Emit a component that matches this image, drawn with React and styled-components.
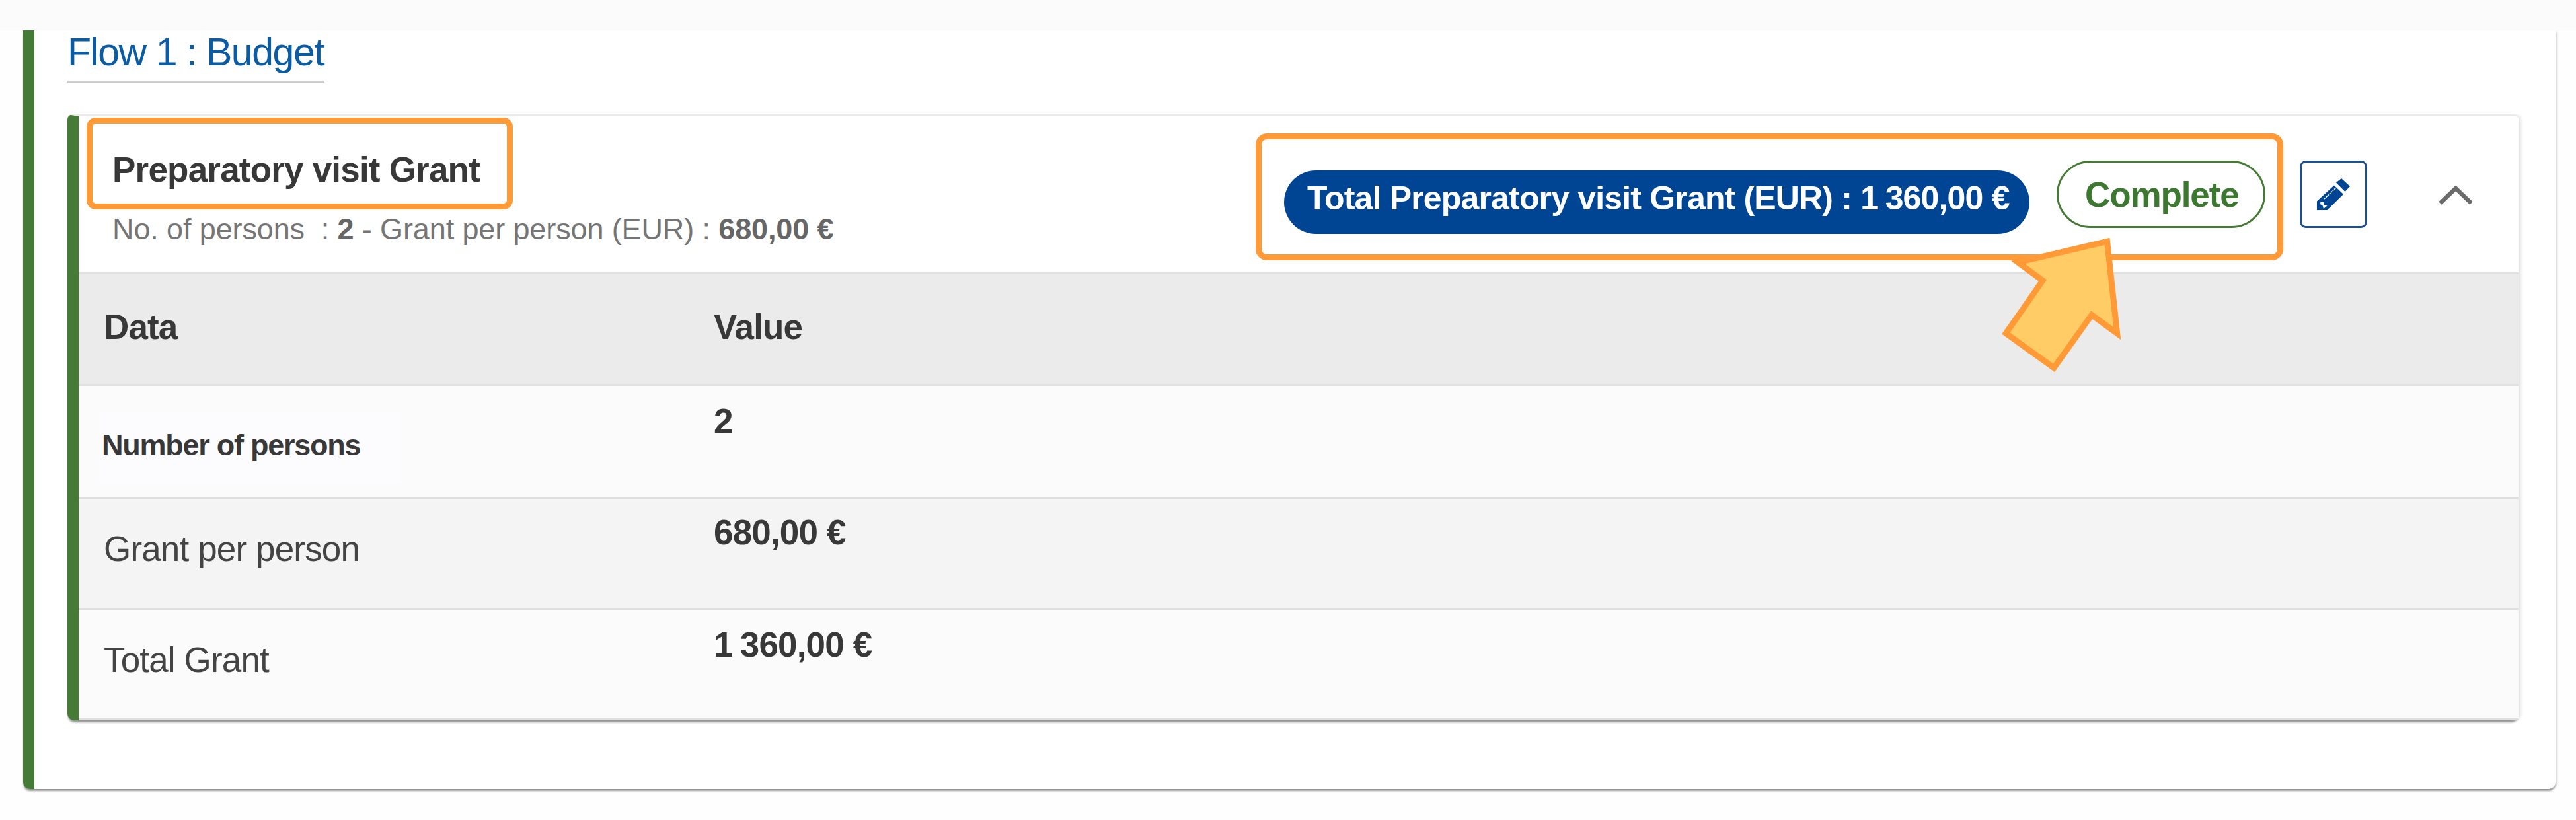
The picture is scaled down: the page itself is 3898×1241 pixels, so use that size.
import React from 'react';
import styled, { createGlobalStyle } from 'styled-components'

const GlobalStyle = createGlobalStyle`
  * {
    box-sizing: border-box;
  }

  body {
    margin: 0;
    background-color: #fefefe;
    font-family: "Liberation Sans", Arial, sans-serif;
    color: #383838;
  }
`;

const Page = styled.div`
  height: 1241px;
  overflow: hidden;
  padding-left: 35px;
  padding-right: 31px;

  &::before {
    content: '';
    display: block;
    height: 46px;
    margin: 0 -31px 0 -35px;
    background-color: #fbfbfb;
  }
`;

const Panel = styled.section`
  height: 1148px;
  padding: 3px 56px 0 50px;
  background-color: white;
  border-left: 17px solid #457b36;
  border-radius: 0 0 10px 10px;
  box-shadow: 0 4px 3px -1px rgba(0, 0, 0, 0.4), 4px 1px 3px -1px rgba(0, 0, 0, 0.13);
`;

const FlowTitle = styled.h2`
  width: 388px;
  margin: 0 0 48px;
  padding-bottom: 13px;
  border-bottom: 3px solid #ccc;
  color: #0b5ca3;
  font-size: 59px;
  font-weight: 400;
  letter-spacing: -1.45px;
  line-height: 60px;
  white-space: nowrap;
`;

const Card = styled.article`
  position: relative;
  height: 917px;
  background-color: white;
  border-top: 3px solid #ebebeb;
  border-left: 17px solid #457b36;
  border-radius: 8px 6px 10px 10px;
  box-shadow: 0 4px 3px -1px rgba(0, 0, 0, 0.4), 5px 1px 4px -1px rgba(0, 0, 0, 0.1);
`;

const CardHeader = styled.header`
  display: flex;
  align-items: flex-start;
  height: 239px;
  padding-right: 69px;
  border-bottom: 3px solid #e0e0e0;
`;

const Heading = styled.div`
  padding-top: 2px;
  margin-right: auto;
`;

const Highlight = styled.div`
  border: 9px solid #ff9a36;
  border-radius: ${props => props.$radius}px;
`;

const TitleHighlight = styled(Highlight)`
  width: 645px;
  height: 139px;
  margin-left: 12px;
  padding: 40px 0 0 30px;
`;

const Title = styled.h3`
  margin: 0;
  font-size: 53px;
  letter-spacing: -0.8px;
  line-height: 60px;
  white-space: nowrap;
`;

const Subtitle = styled.div`
  margin-top: 4px;
  padding-left: 51px;
  color: #757575;
  font-size: 45px;
  letter-spacing: -0.12px;
  line-height: 52px;
  white-space: pre;

  b {
    color: #666;
  }
`;

const StatusHighlight = styled(Highlight)`
  display: flex;
  align-items: flex-start;
  width: 1555px;
  height: 192px;
  margin-top: 26px;
  padding-left: 34px;
`;

const TotalBadge = styled.div`
  width: 1128px;
  height: 96px;
  margin-top: 47px;
  padding: 12px 0 0 35px;
  border-radius: 48px;
  background-color: #004494;
  color: white;
  font-size: 50px;
  font-weight: 700;
  letter-spacing: -0.83px;
  line-height: 60px;
  white-space: nowrap;
`;

const StatusBadge = styled.div`
  width: 316px;
  height: 102px;
  margin: 32px 0 0 41px;
  padding: 19px 0 0 40px;
  border: 3px solid #457b36;
  border-radius: 51px;
  color: #3d7830;
  font-size: 53px;
  font-weight: 700;
  letter-spacing: -1.1px;
  line-height: 60px;
`;

const EditButton = styled.button`
  display: flex;
  align-items: center;
  justify-content: center;
  width: 102px;
  height: 102px;
  margin: 67px 0 0 25px;
  padding: 0;
  border: 3px solid #1d4f91;
  border-radius: 9px;
  background-color: white;
`;

const Toggle = styled.div`
  display: flex;
  margin: 104px 0 0 108px;
`;

const Row = styled.div`
  display: grid;
  grid-template-columns: 961px 1fr;
  align-items: start;
  height: ${props => props.$height}px;
  background-color: ${props => props.$background};
  border-bottom: 3px solid #e0e0e0;
  font-size: 53px;
  letter-spacing: -0.85px;
  line-height: 60px;

  &:last-child {
    border-bottom: 0;
    border-radius: 0 0 10px 0;
  }
`;

const HeadCell = styled.div`
  padding: 50px 0 0 ${props => props.$left || 0}px;
  font-weight: 700;
`;

const Label = styled.div`
  padding: 46px 0 0 38px;
  color: #444;
`;

const StrongLabel = styled.div`
  width: 455px;
  height: 107px;
  margin: 41px 0 0 31px;
  padding: 24px 0 0 4px;
  background-color: #fcfcfe;
  font-size: 45px;
  font-weight: 700;
  letter-spacing: -1.25px;
  line-height: 50px;
`;

const Value = styled.div`
  padding-top: ${props => props.$top}px;
  font-weight: 700;
`;

// narrow gap between the thousands and the rest of an amount
const Thousands = styled.span`
  margin-right: 0.21em;
`;

const Pointer = styled.svg`
  position: absolute;
  top: 164px;
  left: 2891px;
`;

const Amount = () => (
  <>
    <Thousands>1</Thousands>360,00 €
  </>
);

const PencilIcon = () => (
  <svg width="50" height="48" viewBox="0 0 50 48">
    <path d="M37 0L50 12L42.5 20L29 6.5Z" fill="#004494" />
    <path d="M26 10.5L40 24L15.5 48H0V34.5Z" fill="#004494" />
    <path d="M5.5 35L10 36L11 40L15.5 41.5L10 46L8.5 41L5 39Z" fill="white" />
    <path d="M11 31L29 14" stroke="white" strokeWidth="1.6" strokeDasharray="2.5 1" />
  </svg>
);

const ChevronIcon = () => (
  <svg width="52" height="31" viewBox="0 0 52 31" fill="none">
    <path d="M2.5 27.5L26 5L49.5 27.5" stroke="#6b6b6b" strokeWidth="6.5" />
  </svg>
);

const App = () => (
  <Page>
    <GlobalStyle />
    <Panel>
      <FlowTitle>Flow 1 : Budget</FlowTitle>
      <Card>
        <CardHeader>
          <Heading>
            <TitleHighlight $radius={14}>
              <Title>Preparatory visit Grant</Title>
            </TitleHighlight>
            <Subtitle>No. of persons  : <b>2</b> - Grant per person (EUR) : <b>680,00 €</b></Subtitle>
          </Heading>
          <StatusHighlight $radius={17}>
            <TotalBadge>Total Preparatory visit Grant (EUR) : <Amount /></TotalBadge>
            <StatusBadge>Complete</StatusBadge>
          </StatusHighlight>
          <EditButton aria-label="Edit"><PencilIcon /></EditButton>
          <Toggle><ChevronIcon /></Toggle>
        </CardHeader>
        <Row $height={169} $background="#ebebeb">
          <HeadCell $left={38}>Data</HeadCell>
          <HeadCell>Value</HeadCell>
        </Row>
        <Row $height={171} $background="#fbfbfb">
          <StrongLabel>Number of persons</StrongLabel>
          <Value $top={24}>2</Value>
        </Row>
        <Row $height={168} $background="#f4f4f4">
          <Label>Grant per person</Label>
          <Value $top={21}>680,00 €</Value>
        </Row>
        <Row $height={167} $background="#fbfbfb">
          <Label>Total Grant</Label>
          <Value $top={23}><Amount /></Value>
        </Row>
        <Pointer width="220" height="240" viewBox="0 0 220 240">
          <path
            d="M178.5 25.3L43.5 57L81 84.5L25.3 164.5L98 216.7L155.2 136.5L193.7 164.7Z"
            fill="#ffcc66"
            stroke="#ff9a36"
            strokeWidth="9"
            strokeMiterlimit="10"
          />
        </Pointer>
      </Card>
    </Panel>
  </Page>
);

export default App;
